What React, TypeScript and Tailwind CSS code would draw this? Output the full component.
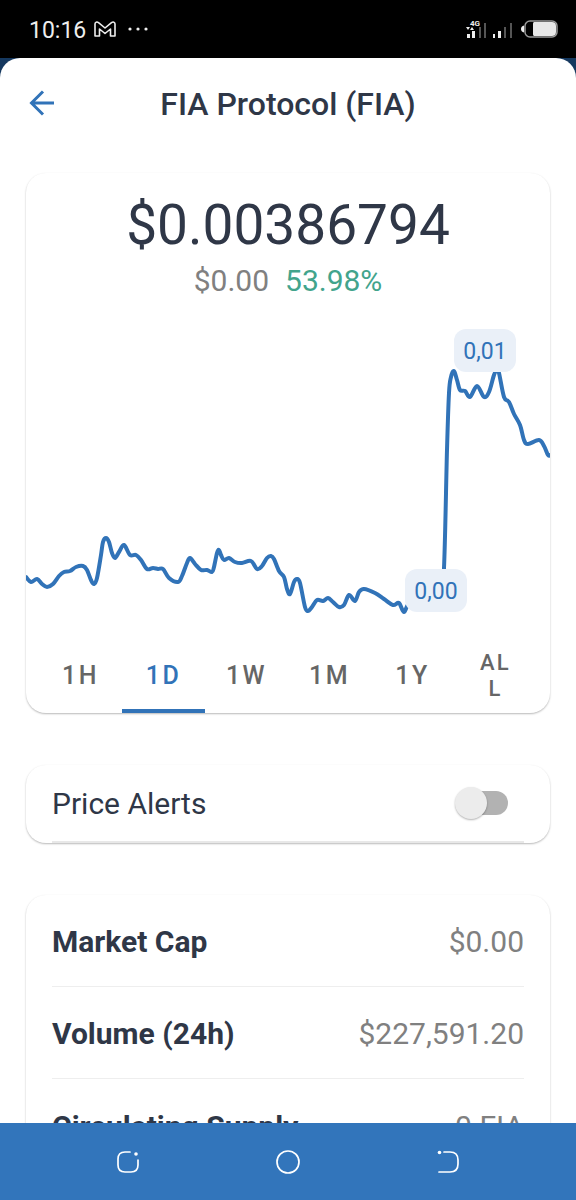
import { useState } from "react";
import { clsx } from "clsx";

const CHART_WIDTH = 524;
const CHART_HEIGHT = 326;

const PRICES: [number, number][] = [
  [0, 267], [5, 272], [11, 269], [16, 274], [21, 277], [27, 274], [33, 266], [38, 262], [44, 261],
  [50, 257], [57, 256], [61, 260], [65, 270], [68, 274], [71, 268], [75, 245], [77, 232], [80, 228],
  [83, 232], [86, 243], [89, 248], [93, 242], [98, 235], [104, 245], [110, 245], [115, 250],
  [121, 259], [127, 258], [132, 259], [137, 259], [143, 268], [152, 272], [156, 266], [161, 253],
  [164, 248], [169, 254], [175, 260], [181, 260], [186, 262], [188, 257], [191, 243], [193, 240],
  [195, 245], [198, 250], [203, 248], [209, 252], [216, 253], [225, 251], [231, 259], [236, 256],
  [241, 248], [245, 246], [248, 249], [253, 261], [258, 267], [261, 279], [264, 284], [268, 272],
  [271, 269], [274, 273], [279, 297], [282, 301], [286, 297], [291, 290], [297, 291], [302, 288],
  [307, 292], [313, 297], [318, 295], [323, 285], [329, 291], [333, 282], [338, 279], [349, 283],
  [358, 289], [367, 295], [373, 293], [378, 302], [384, 293], [400, 297], [414, 286], [418, 258],
  [421, 140], [423, 83], [425, 67], [428, 61], [431, 70], [434, 80], [439, 81], [444, 87],
  [451, 76], [458, 87], [463, 82], [468, 65], [471, 60], [473, 63], [478, 87], [483, 92],
  [488, 104], [494, 115], [498, 130], [502, 134], [513, 130], [518, 136], [522, 145], [524, 145],
];

const RANGES = ["1H", "1D", "1W", "1M", "1Y", "ALL"];

const STATS = [
  { label: "Market Cap", value: "$0.00" },
  { label: "Volume (24h)", value: "$227,591.20" },
  { label: "Circulating Supply", value: "0 FIA" },
];

// Catmull-Rom spline through the points, written as cubic beziers
function smoothPath(points: [number, number][]) {
  let d = `M${points[0][0]} ${points[0][1]}`;
  for (let i = 0; i < points.length - 1; i++) {
    const p0 = points[i - 1] ?? points[i];
    const p1 = points[i];
    const p2 = points[i + 1];
    const p3 = points[i + 2] ?? p2;
    d += `C${p1[0] + (p2[0] - p0[0]) / 6} ${p1[1] + (p2[1] - p0[1]) / 6}`;
    d += ` ${p2[0] - (p3[0] - p1[0]) / 6} ${p2[1] - (p3[1] - p1[1]) / 6}`;
    d += ` ${p2[0]} ${p2[1]}`;
  }
  return d;
}

const cardClass =
  "rounded-[20px] bg-white shadow-[0_1px_2px_rgba(0,0,0,0.28)]";

const markerClass =
  "absolute flex h-[43px] w-[62px] items-center justify-center rounded-xl bg-[#eaf0f8] pt-1 text-[23px] text-[#3173b8]";

const StatusBar = () => (
  <div className="flex h-[58px] shrink-0 items-center justify-between bg-black pl-[29px] pr-[18px] text-[#eeeeee]">
    <div className="flex items-center gap-2">
      <span className="pt-1 text-[23px] leading-7">10:16</span>
      <svg className="h-4 w-[22px]" viewBox="0 0 22 16" fill="none" stroke="currentColor" strokeWidth="1.6" strokeLinejoin="round">
        <path d="M1 3C1 1 3 .6 4.500 1.600L11 7l6.500-5.400C19 .6 21 1 21 3v12h-4.500V8L11 12.500 5.500 8v7H1z" />
      </svg>
      <svg className="ml-1 h-1 w-5" viewBox="0 0 20 4" fill="currentColor">
        <circle cx="2" cy="2" r="1.6" />
        <circle cx="10" cy="2" r="1.6" />
        <circle cx="18" cy="2" r="1.6" />
      </svg>
    </div>
    <div className="flex items-center">
      <svg className="h-6 w-[47px]" viewBox="0 0 47 24" fill="currentColor">
        <text x="4" y="9" fontSize="8" fontWeight="700">4G</text>
        <path d="M0 10h4l-2 3zM4 13l2-3 2 3z" />
        <path d="M1 17h3v4H1zM6 14h3v7H6z" />
        <path d="M13 10h2v11h-2zM18 6h2v15h-2z" fill="#555" />
        <path d="M27 17h2v4h-2zM32 14h3v7h-3z" />
        <path d="M38 10h2v11h-2zM44 6h2v15h-2z" fill="#555" />
      </svg>
      <svg className="ml-2 h-[18px] w-[37px]" viewBox="0 0 37 18">
        <path d="M3 5.5v7C1 12 0 11 0 9s1-3 3-3.5z" fill="#eee" />
        <rect x="4" y="1" width="32" height="16" rx="5" fill="none" stroke="#999" strokeWidth="1.5" />
        <path d="M13 2h18a4 4 0 0 1 4 4v6a4 4 0 0 1-4 4H13a2 2 0 0 1-1-2V4a2 2 0 0 1 1-2z" fill="#e8e8e8" />
      </svg>
    </div>
  </div>
);

const PriceChart = () => (
  <div className="relative">
    <svg
      className="block w-full"
      viewBox={`0 0 ${CHART_WIDTH} ${CHART_HEIGHT}`}
      role="img"
      aria-label="Price history"
    >
      <path
        d={smoothPath(PRICES)}
        fill="none"
        stroke="#3173b8"
        strokeWidth="4"
        strokeLinejoin="round"
        strokeLinecap="round"
      />
    </svg>
    {/* High and low markers */}
    <span className={clsx(markerClass, "right-[34px] top-[19px]")}>0,01</span>
    <span className={clsx(markerClass, "right-[83px] bottom-6")}>0,00</span>
  </div>
);

const RangeTabs = () => {
  const [active, setActive] = useState("1D");

  return (
    <div role="tablist" className="grid grid-cols-6 px-[13px]">
      {RANGES.map((range) => (
        <button
          key={range}
          type="button"
          role="tab"
          aria-selected={range === active}
          onClick={() => setActive(range)}
          className={clsx(
            "flex h-[77px] items-center justify-center border-b-4 pt-[6px] font-medium tracking-widest",
            range === "ALL" ? "px-[22px] text-[22px] leading-[26px] break-all" : "text-[25px]",
            range === active
              ? "border-b-[#3173b8] text-[#3173b8]"
              : "border-b-transparent text-[#666666]",
          )}
        >
          {range}
        </button>
      ))}
    </div>
  );
};

const PriceAlerts = () => {
  const [enabled, setEnabled] = useState(false);

  return (
    <section className={clsx(cardClass, "px-[26px]")}>
      <div className="flex h-[78px] items-center justify-between border-b-2 border-[#e8e8e8] pr-4">
        <label htmlFor="price-alerts" className="text-[30px]">
          Price Alerts
        </label>
        <span className="relative flex h-8 w-[53px] items-center">
          <input
            id="price-alerts"
            type="checkbox"
            role="switch"
            checked={enabled}
            onChange={(e) => setEnabled(e.target.checked)}
            className="peer ml-1 h-6 w-full appearance-none rounded-full bg-[#b2b2b2] checked:bg-[#98b9dc]"
          />
          <span className="pointer-events-none absolute left-0 top-0 size-8 rounded-full bg-[#ececec] shadow-[0_1px_2px_rgba(0,0,0,0.3)] peer-checked:left-[21px] peer-checked:bg-[#3173b8]" />
        </span>
      </div>
    </section>
  );
};

const NavBar = () => (
  <nav className="flex h-[77px] shrink-0 items-center bg-[#3275bb] px-12 text-white">
    <button type="button" aria-label="Recent apps" className="flex flex-1 justify-center">
      <svg className="size-6" viewBox="0 0 24 24" fill="none" stroke="currentColor" strokeWidth="1.7" strokeLinecap="round">
        <path d="M14 2H9Q2 2 2 9v6q0 7 7 7h6q7 0 7-7v-5" />
        <circle cx="20" cy="4" r="1.8" fill="currentColor" stroke="none" />
      </svg>
    </button>
    <button type="button" aria-label="Home" className="flex flex-1 justify-center">
      <svg className="size-6" viewBox="0 0 24 24" fill="none" stroke="currentColor" strokeWidth="1.7">
        <circle cx="12" cy="12" r="11" />
      </svg>
    </button>
    <button type="button" aria-label="Back" className="flex flex-1 justify-center">
      <svg className="size-6" viewBox="0 0 24 24" fill="none" stroke="currentColor" strokeWidth="1.7" strokeLinecap="round">
        <path d="M8 2h6q8 0 8 8v4q0 8-8 8H3" />
        <circle cx="3.5" cy="2.5" r="1.8" fill="currentColor" stroke="none" />
      </svg>
    </button>
  </nav>
);

export default function App() {
  return (
    <div className="flex h-screen flex-col bg-[#15385f] font-['Roboto',sans-serif] text-[#2f3747]">
      <StatusBar />

      <div className="flex min-h-0 flex-1 flex-col overflow-hidden rounded-t-[20px] bg-white">
        <header className="grid h-[92px] shrink-0 grid-cols-[52px_1fr_52px] items-center px-4">
          <button type="button" aria-label="Go back" className="flex justify-center text-[#3173b8]">
            <svg className="size-7" viewBox="0 0 28 28" fill="none" stroke="currentColor" strokeWidth="3">
              <path d="M26 13H3M15 1.5L3.5 13 15 24.5" />
            </svg>
          </button>
          <h1 className="text-center text-[32px] font-medium">FIA Protocol (FIA)</h1>
        </header>

        <main className="flex min-h-0 flex-1 flex-col gap-[52px] overflow-hidden px-[26px] pt-[23px] *:shrink-0">
          <section className={cardClass}>
            <div className="pt-5 pb-[11px] text-center">
              <p className="text-[55px] leading-[64px]">$0.00386794</p>
              <p className="mt-[6px] flex justify-center gap-4 text-[30px] leading-9">
                <span className="text-[#808080]">$0.00</span>
                <span className="text-[#42a48c]">53.98%</span>
              </p>
            </div>
            <PriceChart />
            <RangeTabs />
          </section>

          <PriceAlerts />

          <section className={clsx(cardClass, "px-[26px]")}>
            <dl className="divide-y divide-[#eeeeee]">
              {STATS.map(({ label, value }) => (
                <div key={label} className="flex h-[92px] items-center justify-between pt-[2px] text-[30px]">
                  <dt className="font-bold">{label}</dt>
                  <dd className="text-[#808080]">{value}</dd>
                </div>
              ))}
            </dl>
          </section>
        </main>
      </div>

      <NavBar />
    </div>
  );
}
